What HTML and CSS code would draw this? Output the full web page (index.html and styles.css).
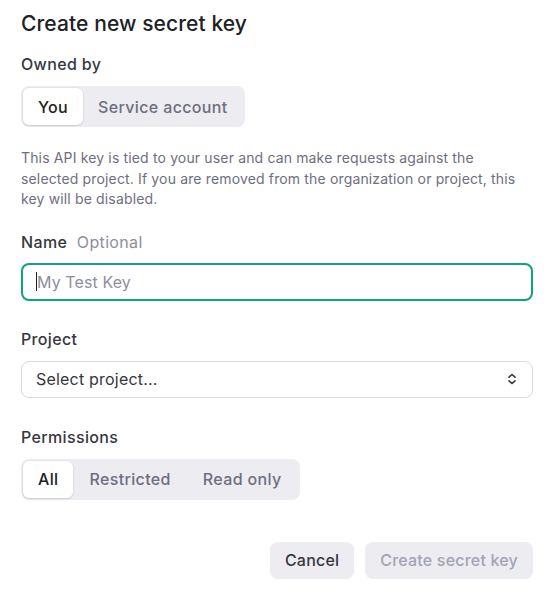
FILE: index.html
```html
<!DOCTYPE html>
<html>
<head>
<meta charset="utf-8">
<link rel="stylesheet" href="styles.css">
</head>
<body>
<div class="modal">
  <h1 class="title">Create new secret key</h1>

  <div class="field owned">
    <div class="label">Owned by</div>
    <div class="seg">
      <button class="seg-item active">You</button>
      <button class="seg-item">Service account</button>
    </div>
  </div>

  <p class="desc">This API key is tied to your user and can make requests against the selected project. If you are removed from the organization or project, this key will be disabled.</p>

  <div class="field name">
    <div class="label">Name <span class="optional">Optional</span></div>
    <div class="input focused"><span class="caret"></span><span class="placeholder">My Test Key</span></div>
  </div>

  <div class="field project">
    <div class="label">Project</div>
    <div class="select">
      <span>Select project...</span>
      <svg class="chev" width="12" height="14" viewBox="0 0 12 14" fill="none" stroke="#353740" stroke-width="1.6" stroke-linecap="round" stroke-linejoin="round"><path d="M3 5.2 L6 2.5 L9 5.2"/><path d="M3 8.8 L6 11.5 L9 8.8"/></svg>
    </div>
  </div>

  <div class="field perms">
    <div class="label">Permissions</div>
    <div class="seg">
      <button class="seg-item active">All</button>
      <button class="seg-item">Restricted</button>
      <button class="seg-item">Read only</button>
    </div>
  </div>

  <div class="actions">
    <button class="btn">Cancel</button>
    <button class="btn disabled">Create secret key</button>
  </div>
</div>
</body>
</html>
```
FILE: styles.css
```css
* { box-sizing: border-box; }
html, body { margin: 0; padding: 0; background: #ffffff; }
body {
  font-family: Inter, "Noto Sans", "Liberation Sans", sans-serif;
  color: #202123;
  -webkit-font-smoothing: antialiased;
}
.modal {
  width: 551px;
  padding: 10px 18px 0 21px;
  display: flex;
  flex-direction: column;
}
.title {
  margin: 0;
  font-size: 21px;
  line-height: 28px;
  font-weight: 500;
  color: #202123;
  letter-spacing: 0.1px;
}
.field { display: flex; flex-direction: column; align-items: flex-start; gap: 10px; }
.label {
  font-size: 16px;
  line-height: 24px;
  font-weight: 500;
  color: #353740;
  letter-spacing: 0.35px;
}
.optional { font-weight: 400; color: #8e8ea0; margin-left: 5px; }
.owned { margin-top: 14px; }
.seg {
  display: flex;
  background: #ececf1;
  border-radius: 8px;
  padding: 2px;
  height: 41px;
}
.seg-item {
  border: 0;
  background: transparent;
  font-family: inherit;
  font-size: 16px;
  font-weight: 500;
  letter-spacing: 0.35px;
  color: #6e6e80;
  padding: 0 15px;
  border-radius: 6px;
  height: 37px;
  cursor: pointer;
}
.perms .seg-item { padding: 0 16px; }
.perms .seg-item.active { padding: 0 15px; }
.seg-item.active {
  background: #ffffff;
  color: #202123;
  box-shadow: 0 1px 2px rgba(0,0,0,0.12), 0 0 0 0.5px rgba(0,0,0,0.05);
}
.desc {
  margin: 21px 0 0;
  max-width: 505px;
  font-size: 14px;
  line-height: 20.5px;
  letter-spacing: 0.15px;
  color: #6e6e80;
}
.name { margin-top: 20px; gap: 9px; }
.input {
  width: 100%;
  height: 38px;
  border: 2px solid #10a37f;
  border-radius: 8px;
  display: flex;
  align-items: center;
  padding: 0 13px;
  font-size: 16px;
  letter-spacing: 0.1px;
}
.caret { width: 1px; height: 19px; background: #202123; }
.placeholder { color: #8e8ea0; }
.project { margin-top: 26px; }
.select {
  width: 100%;
  height: 37px;
  border: 1px solid #d9d9e3;
  border-radius: 8px;
  display: flex;
  align-items: center;
  justify-content: space-between;
  padding: 0 14px;
  font-size: 16px;
  letter-spacing: 0.2px;
  color: #353740;
}
.chev { display: block; }
.perms { margin-top: 27px; }
.actions {
  margin-top: 42px;
  display: flex;
  justify-content: flex-end;
  gap: 11px;
}
.btn {
  border: 0;
  background: #ececf1;
  border-radius: 8px;
  height: 37px;
  padding: 0 15px;
  font-family: inherit;
  font-size: 16px;
  font-weight: 500;
  letter-spacing: 0.2px;
  color: #353740;
}
.btn.disabled { color: #a3a3b3; }
```
